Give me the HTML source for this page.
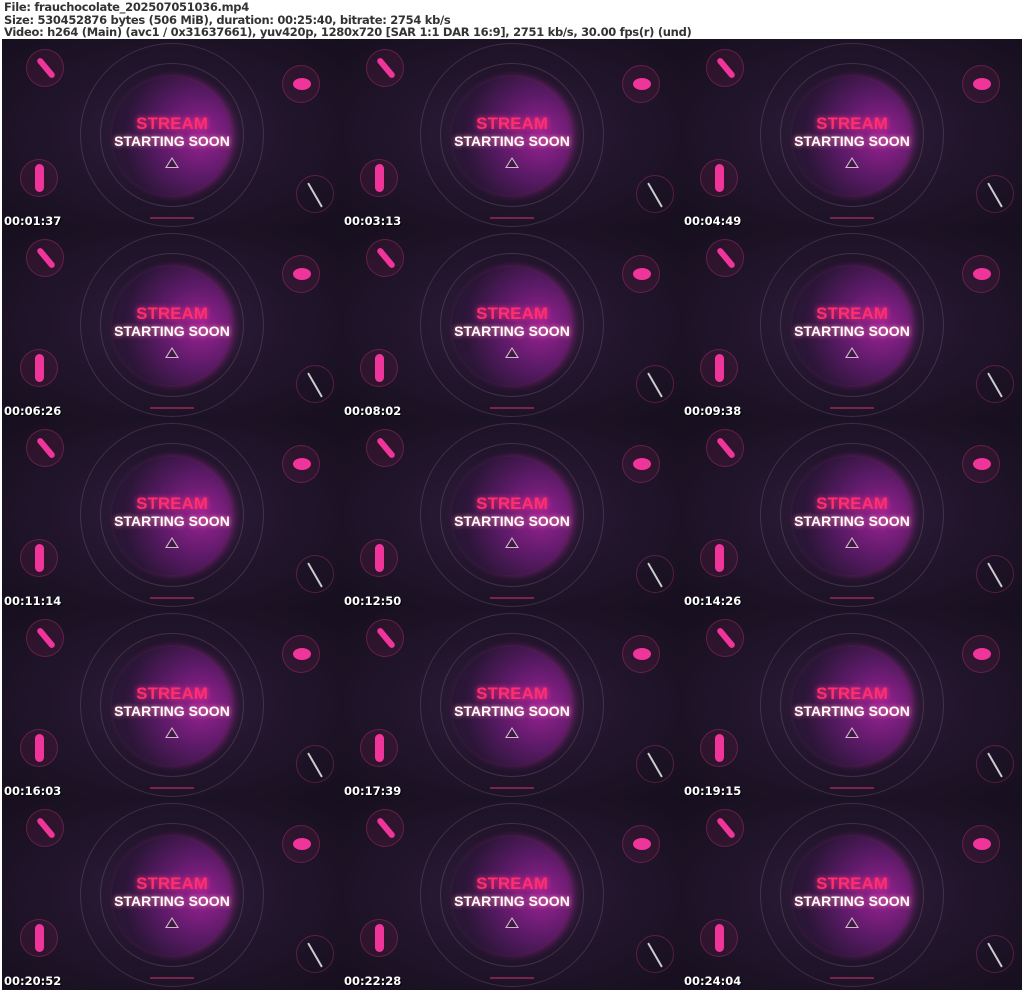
<!DOCTYPE html>
<html><head><meta charset="utf-8"><style>
*{margin:0;padding:0;box-sizing:border-box}
body{width:1024px;height:990px;background:#fff;position:relative;overflow:hidden;font-family:"DejaVu Sans",sans-serif}
.hdr{position:absolute;left:4px;top:1px;font-size:11.5px;line-height:12.5px;color:#333;font-weight:bold;white-space:nowrap;letter-spacing:-0.3px}
.grid{position:absolute;left:2px;top:39px;width:1020px;height:951px;background:#1a1222;display:grid;grid-template-columns:repeat(3,340px);grid-template-rows:repeat(5,190px)}
.t{position:relative;overflow:hidden;background:radial-gradient(ellipse at 50% 50%,#33203d 0%,#22152c 45%,#160f1e 100%)}
.ring{position:absolute;border-radius:50%;border:1px solid rgba(200,150,200,.2)}
.sph{position:absolute;left:110px;top:38px;width:118px;height:118px;border-radius:50%;background:radial-gradient(circle at 75% 50%,#9a2294 0%,#5a1a66 40%,#2c1638 72%,#221430 100%);box-shadow:4px 0 8px rgba(220,40,200,.45)}
.s1{position:absolute;left:0;width:340px;text-align:center;top:75px;font-family:"Liberation Sans",sans-serif;font-weight:bold;font-size:17px;color:#ff2e6e;text-shadow:0 0 6px #ff2e80}
.s2{position:absolute;left:0;width:340px;text-align:center;top:94px;font-family:"Liberation Sans",sans-serif;font-weight:bold;font-size:14px;color:#fff;text-shadow:0 0 5px #f8a}
.tri{position:absolute;left:163px;top:118px;width:0;height:0;border-left:7px solid transparent;border-right:7px solid transparent;border-bottom:11px solid #d8b0d0}
.tri::after{content:"";position:absolute;left:-5px;top:2px;border-left:5px solid transparent;border-right:5px solid transparent;border-bottom:8px solid #3a1c40}
.ic{position:absolute;width:38px;height:38px;border-radius:50%;border:1px solid rgba(230,60,140,.3);background:rgba(120,30,80,.2)}
.ic i{position:absolute;background:#f0359a;border-radius:6px}
.ts{position:absolute;left:2px;top:175px;font-size:11.5px;font-weight:bold;color:#fff;text-shadow:1px 1px 0 #000}
.bar{position:absolute;left:148px;top:178px;width:44px;height:2px;background:rgba(230,60,120,.45)}
</style></head><body>
<div class="hdr">File: frauchocolate_202507051036.mp4<br>Size: 530452876 bytes (506 MiB), duration: 00:25:40, bitrate: 2754 kb/s<br>Video: h264 (Main) (avc1 / 0x31637661), yuv420p, 1280x720 [SAR 1:1 DAR 16:9], 2751 kb/s, 30.00 fps(r) (und)</div>
<div class="grid" id="g"></div>
<script>
var ts=["00:01:37","00:03:13","00:04:49","00:06:26","00:08:02","00:09:38","00:11:14","00:12:50","00:14:26","00:16:03","00:17:39","00:19:15","00:20:52","00:22:28","00:24:04"];
var h="";
ts.forEach(function(t){
h+='<div class="t"><div class="ring" style="left:78px;top:4px;width:184px;height:184px"></div><div class="ring" style="left:98px;top:24px;width:144px;height:144px"></div><div class="sph"></div>'+
'<div class="ic" style="left:24px;top:10px"><i style="left:16px;top:6px;width:6px;height:24px;transform:rotate(-40deg)"></i></div>'+
'<div class="ic" style="left:280px;top:26px"><i style="left:10px;top:12px;width:18px;height:12px;border-radius:50%"></i></div>'+
'<div class="ic" style="left:18px;top:120px"><i style="left:14px;top:4px;width:9px;height:28px"></i></div>'+
'<div class="ic" style="left:294px;top:136px;background:none"><i style="left:17px;top:5px;width:2px;height:28px;background:#ccc;transform:rotate(-30deg)"></i></div>'+
'<div class="s1">STREAM</div><div class="s2">STARTING SOON</div><div class="tri"></div><div class="bar"></div><div class="ts">'+t+'</div></div>';
});
document.getElementById("g").innerHTML=h;
</script>
</body></html>
